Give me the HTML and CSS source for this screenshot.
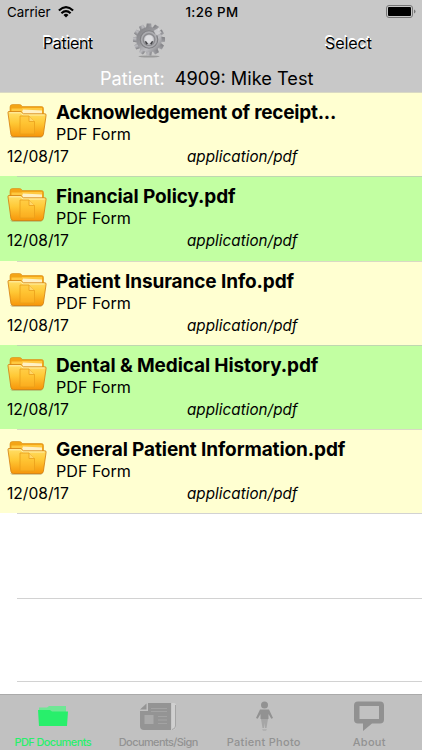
FILE: index.html
```
<!DOCTYPE html>
<html lang="en">
<head>
<meta charset="utf-8">
<title>PDF Documents</title>
<link rel="stylesheet" href="styles.css">
</head>
<body>
<svg class="defs" width="0" height="0" aria-hidden="true">
  <defs>
    <linearGradient id="front" x1="0" y1="0" x2="0" y2="1"><stop offset="0" stop-color="#ffe06a"/><stop offset=".45" stop-color="#ffc936"/><stop offset="1" stop-color="#f7960a"/></linearGradient>
    <linearGradient id="metal" x1="0" y1="0" x2="1" y2="1"><stop offset="0" stop-color="#808084"/><stop offset=".4" stop-color="#98989c"/><stop offset=".65" stop-color="#bcbcc0"/><stop offset="1" stop-color="#77777b"/></linearGradient>
    <symbol id="folder" viewBox="0 0 40 36">
      <path d="M3 33.300h33l-2 1.500H5z" fill="#a78b50" opacity=".6"/>
      <path d="M3 13V4Q3 1.500 5.500 1.500h7q2 0 2.500 2h19.500q2 0 2 2V13z" fill="#f3a516" stroke="#d88b15" stroke-width=".6"/>
      <path d="M4.500 5.500h10l1-.500H35V12H4.500z" fill="#ffc940"/>
      <path d="M16 6.500l19 1V12H14z" fill="#fff1c5"/>
      <path d="M1.500 8.500h12.500l2.500 2.300h21.500q1.300 0 1.100 1.500l-2.700 19q-.3 2.200-2.500 2.200H6.300q-2 0-2.400-2.200L1 10q-.2-1.500.5-1.500z" fill="url(#front)" stroke="#d27c0d" stroke-width=".8"/>
      <path d="M2.500 9.800h11l2.500 2.200H37.500" fill="none" stroke="#ffedaa"/>
      <path d="M13 13h9l5.500 5.500V31H13z" fill="#ffbd30" fill-opacity=".4" stroke="#eaa01a" stroke-width=".8"/>
      <path d="M22 13v5.500h5.500" fill="#ffd769" stroke="#eaa01a" stroke-width=".8"/>
    </symbol>
  </defs>
</svg>
<div class="screen">
  <header class="top">
    <div class="status">
      <div class="carrier"><span>Carrier</span>
        <svg width="16" height="12" viewBox="0 0 16 12" fill="none" stroke="#000" stroke-width="2.100"><path d="M.9 4.500Q8-2.200 15.100 4.500M3.400 7.200Q8 2.900 12.600 7.200"/><path d="M5.500 8.900Q8 6.700 10.500 8.900L8 11.500z" fill="#000" stroke="none"/></svg>
      </div>
      <span class="time">1:26 PM</span>
      <svg class="battery" width="30" height="14" viewBox="0 0 30 14"><rect x=".5" y=".5" width="26" height="12" rx="2.500" fill="none" stroke="#777"/><rect x="2" y="2" width="23" height="9" rx="1" fill="#000"/><path d="M28 4.500q1.500.4 1.500 2t-1.500 2z" fill="#777"/></svg>
    </div>
    <div class="nav">
      <span class="nav-patient">Patient</span>
      <svg class="gear" width="34" height="37" viewBox="-17.500 -17.500 35 37">
        <ellipse cy="17.500" rx="11" ry="1" fill="#9a9a9a"/>
        <g fill="url(#metal)">
          <g id="teeth"><path id="t" d="M-3-12l.7-4.500h4.600l.7 4.500v24l-.7 4.500h-4.600l-.7-4.500z"/><use href="#t" transform="rotate(30)"/><use href="#t" transform="rotate(60)"/></g>
          <use href="#teeth" transform="rotate(90)"/>
          <circle r="13"/>
        </g>
        <circle r="9" fill="#acacb0" stroke="#808084" stroke-width="1.200"/>
        <circle r="6" fill="#c2c2c6" stroke="#8c8c90" stroke-width="1.400"/>
        <circle cy="-.5" r="4" fill="#dedee1"/>
        <path d="M-4.500 1.500l2 .5L-1 4.500l-2 .5zM4.500 1.500l-2 .5L1 4.500l2 .5z" fill="#444448"/>
        <path d="M5-9l5-3 3 5-6 3z" fill="#dadadd" opacity=".7"/>
      </svg>
      <span class="nav-select">Select</span>
    </div>
    <div class="patient"><span class="p-label">Patient:</span><span class="p-name">4909: Mike Test</span></div>
  </header>
  <main class="list">
    <article class="row first"><svg class="folder"><use href="#folder"/></svg><h2>Acknowledgement of receipt...</h2><p class="kind">PDF Form</p><span class="date">12/08/17</span><em>application/pdf</em></article>
    <article class="row green"><svg class="folder"><use href="#folder"/></svg><h2>Financial Policy.pdf</h2><p class="kind">PDF Form</p><span class="date">12/08/17</span><em>application/pdf</em></article>
    <article class="row"><svg class="folder"><use href="#folder"/></svg><h2>Patient Insurance Info.pdf</h2><p class="kind">PDF Form</p><span class="date">12/08/17</span><em>application/pdf</em></article>
    <article class="row green"><svg class="folder"><use href="#folder"/></svg><h2>Dental &amp; Medical History.pdf</h2><p class="kind">PDF Form</p><span class="date">12/08/17</span><em>application/pdf</em></article>
    <article class="row"><svg class="folder"><use href="#folder"/></svg><h2>General Patient Information.pdf</h2><p class="kind">PDF Form</p><span class="date">12/08/17</span><em>application/pdf</em></article>
    <div class="blank"></div>
    <div class="blank"></div>
  </main>
  <footer class="tabs">
    <div class="tab active">
      <svg width="32" height="32" viewBox="0 0 32 32"><path d="M2 7.500h8l2-1.500h17v6H2z" fill="#6fe795"/><path d="M1 10h12l2 1.500h16L30 26H2z" fill="#28ef6b"/></svg>
      <span class="l1">PDF Documents</span></div>
    <div class="tab">
      <svg width="36" height="32" viewBox="0 0 36 32"><path d="M8 3h23v27H4q-4 0-4-4V11h8z" fill="#949494"/><path d="M6.500 3.500V9.500H0z" fill="#949494"/><path d="M31.500 3H34q2 0 2 2v22q0 3-4.500 3z" fill="#d0d0d0"/><path d="M35.500 5v21q0 3-3.500 3.500" stroke="#a5a5a5" fill="none"/><rect x="4.500" y="15" width="9" height="9" fill="#aaa"/><path d="M11 8.500h16M11 11.500h16M18 16.500h9M18 20h9M18 23.500h9" stroke="#a3a3a3" stroke-width="1.200"/></svg>
      <span class="l2">Documents/Sign</span></div>
    <div class="tab">
      <svg width="32" height="32" viewBox="0 0 32 32"><circle cx="16.500" cy="5" r="3.500" fill="#929292"/><path d="M12 9.500h9l4 8.500-1.700.8L20.500 14v5h-8v-5l-2.800 4.800L8 18z" fill="#929292"/><path d="M13 19h7l-1.500 9h-1.500l-.5-5-.5 5H14.500z" fill="#a6a6a6"/><path d="M14 29h5l-1 2h-3z" fill="#b2b2b2"/></svg>
      <span class="l3">Patient Photo</span></div>
    <div class="tab">
      <svg width="32" height="32" viewBox="0 0 32 32"><path d="M5 1.500h22q4 0 4 4v14q0 4-4 4h-8L10 31v-7.500H5q-4 0-4-4v-14q0-4 4-4zM6.500 6v13H26V6z" fill="#919191" fill-rule="evenodd"/></svg>
      <span class="l4">About</span></div>
  </footer>
</div>
</body>
</html>
```
FILE: styles.css
```
* { box-sizing: border-box; }
body { margin: 0; font-family: Inter, "Liberation Sans", sans-serif; color: #000; }
h2, p { margin: 0; }
.defs { position: absolute; }
.screen { width: 422px; height: 750px; display: flex; flex-direction: column; background: #fff; overflow: hidden; white-space: nowrap; }
.top { height: 92px; flex: none; background: #c8c8c8; }
.status { height: 23px; display: grid; grid-template-columns: 1fr auto 1fr; align-items: center; padding: 1px 7px 0 7px; font-size: 13.3px; }
.carrier { display: flex; gap: 7px; align-items: center; }
.time { font-weight: 500; letter-spacing: .4px; padding-left: 2px; }
.battery { justify-self: end; margin-right: -1px; }
.nav { height: 41px; display: grid; grid-template-columns: 132px 1fr 97px; align-items: start; }
.nav span { font-size: 16px; line-height: 20px; color: #000; text-shadow: -1px -2px 0 #fff, -.5px -1.5px 0 #fff; margin-top: 10px; }
.nav-patient { padding-left: 43px; letter-spacing: -.35px; }
.nav-select { letter-spacing: -.05px; }
.gear { margin-top: -1px; }
.patient { height: 28px; display: flex; align-items: center; gap: 10px; padding: 0 0 0 100px; font-size: 18.2px; }
.p-label { color: #fff; }
.list { flex: 1; min-height: 0; background: #fff; }
.row { height: 84.25px; display: grid; grid-template-columns: 49px 131px 1fr; grid-template-rows: 22px 21px 25px; padding: 10px 7px 0; background: linear-gradient(#d9d9c4, #d9d9c4) 17px 0 / 100% 1px no-repeat #ffffd1; }
.row.green { background-color: #c2ffa2; background-image: linear-gradient(#bed8b0, #bed8b0); }
.row.first { background-position: 0 0; }
.folder { width: 40px; height: 36px; grid-row: 1 / 3; margin-top: 1px; }
.row h2 { grid-column: 2 / 4; font-size: 19px; line-height: 22px; font-weight: 700; letter-spacing: -.1px; }
.row.first h2 { letter-spacing: -.24px; }
.kind { grid-column: 2 / 4; font-size: 16.1px; line-height: 20px; }
.date { grid-column: 1 / 3; font-size: 15.6px; line-height: 24px; }
.row em { font-size: 15.2px; line-height: 24px; letter-spacing: .05px; }
.blank { height: 84.25px; margin-left: 17px; border-top: 1px solid #d2d2d2; }
.blank:last-child { border-bottom: 1px solid #d2d2d2; }
.tabs { height: 56px; flex: none; border-top: 1px solid #aaa; background: #c1c1c1; display: grid; grid-template-columns: repeat(4, 1fr); }
.tab { display: flex; flex-direction: column; align-items: center; padding-top: 5px; color: #929292; }
.tab span { font-size: 11px; line-height: 15px; margin-top: 3px; font-weight: 500; }
.tab .l1, .tab .l2 { letter-spacing: -.6px; }
.tab .l3 { letter-spacing: .3px; }
.tab .l4 { letter-spacing: .3px; }
.tab.active { color: #28ef6b; }
```
